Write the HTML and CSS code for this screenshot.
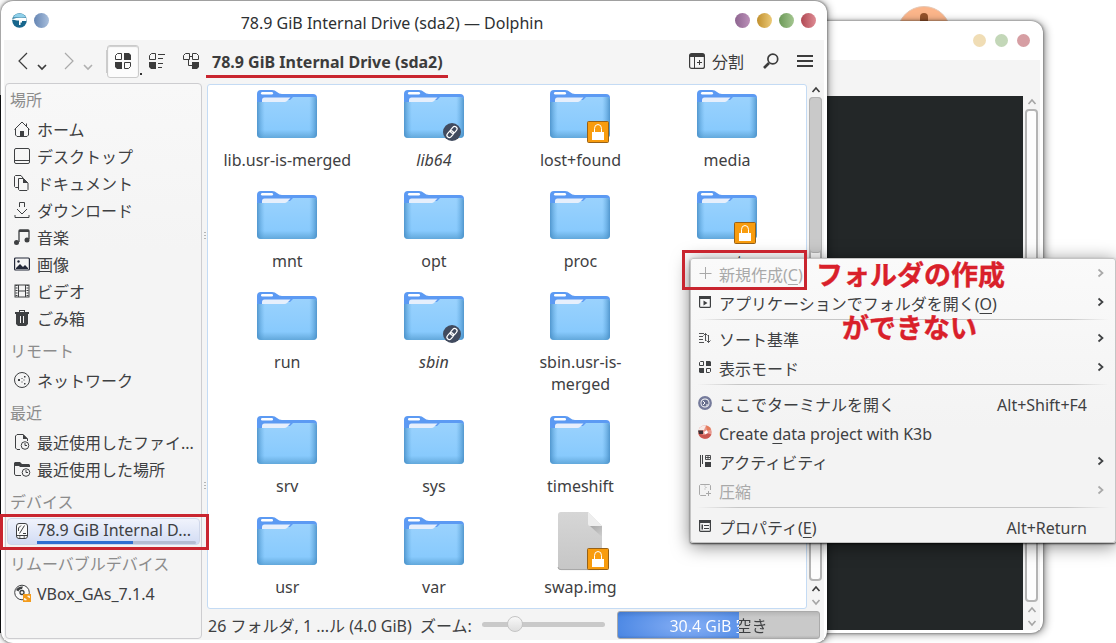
FILE: index.html
```
<!DOCTYPE html>
<html lang="ja">
<head>
    <meta charset="UTF-8">
    <title>78.9 GiB Internal Drive (sda2) — Dolphin</title>
    <link rel="stylesheet" href="styles.css">
</head>
<body>

    <!-- アイコン定義 -->
    <svg class="defs" width="0" height="0">
        <defs>
            <linearGradient id="gFront" x1="0" y1="0" x2="0" y2="1">
                <stop offset="0" stop-color="#9ad2fd"/>
                <stop offset="0.8" stop-color="#88cafd"/>
                <stop offset="1" stop-color="#62a8db"/>
            </linearGradient>
            <linearGradient id="gSide" x1="0" y1="0" x2="1" y2="0">
                <stop offset="0" stop-color="#4289c2" stop-opacity="0.8"/>
                <stop offset="0.13" stop-color="#5ba6dd" stop-opacity="0"/>
                <stop offset="0.87" stop-color="#5ba6dd" stop-opacity="0"/>
                <stop offset="1" stop-color="#4289c2" stop-opacity="0.8"/>
            </linearGradient>
            <linearGradient id="gDoc" x1="0" y1="0" x2="0" y2="1">
                <stop offset="0" stop-color="#d6d6d6"/>
                <stop offset="1" stop-color="#c6c6c6"/>
            </linearGradient>
            <linearGradient id="gFold" x1="0" y1="0" x2="1" y2="1">
                <stop offset="0" stop-color="#a6a6a6"/>
                <stop offset="1" stop-color="#cfcfcf"/>
            </linearGradient>
        </defs>
        <symbol id="folder" viewBox="0 0 64 64">
            <path d="M2 20V9q0-4 4-4h11q3 0 5 2t5 2h31q4 0 4 4v10z" fill="#5c9af3"/>
            <rect x="6" y="7" width="12" height="2.4" rx="1.2" fill="#fff"/>
            <path d="M2 17h5l1-2h27l3-3h20q4 0 4 3v34q0 4-4 4H6q-4 0-4-4z" fill="url(#gFront)"/>
            <path d="M2 17h5l1-2h27l3-3h20q4 0 4 3v34q0 4-4 4H6q-4 0-4-4z" fill="url(#gSide)"/>
            <path d="M7 17v-2q0-2.500 2.500-2.500h26L32.500 15.500q-1.500 1.500-3 1.500z" fill="#e6effc"/>
        </symbol>
        <symbol id="file" viewBox="0 0 64 64">
            <path d="M10 3q0-3 3-3h27l14 14v41q0 3-3 3H13q-3 0-3-3z" fill="url(#gDoc)"/>
            <path d="M10 55q0 2.600 3 2.600h38q3 0 3-2.600" fill="none" stroke="#a5a5a5"/>
            <path d="M42 14h12v11z" fill="url(#gFold)"/>
            <path d="M40 0l14 14H42q-2 0-2-2z" fill="#eee"/>
        </symbol>
        <symbol id="lock" viewBox="0 0 22 22">
            <rect x="0.500" y="0.500" width="21" height="21" rx="1" fill="#f89c0e" stroke="#976117"/>
            <path d="M7.500 11V7.500a3.500 4 0 0 1 7 0V11" fill="none" stroke="#fff" stroke-width="1"/>
            <rect x="5" y="11" width="12" height="8" fill="#fff"/>
        </symbol>
        <symbol id="link" viewBox="0 0 18 18">
            <circle cx="9" cy="9" r="9" fill="#414b5f"/>
            <g fill="none" stroke="#fff" stroke-width="1.200" transform="rotate(-50 9 9)">
                <rect x="2.500" y="6.600" width="7.500" height="4.800" rx="2.400"/>
                <rect x="8" y="6.600" width="7.500" height="4.800" rx="2.400"/>
            </g>
        </symbol>
        <symbol id="arrow" viewBox="0 0 8 10">
            <path d="M1.500 1.500L5.500 5 1.500 8.500" fill="none" stroke="currentColor" stroke-width="1.700"/>
        </symbol>
        <symbol id="up" viewBox="0 0 10 8">
            <path d="M1.500 6L5 2l3.500 4" fill="none" stroke="currentColor" stroke-width="1.600"/>
        </symbol>
        <symbol id="down" viewBox="0 0 10 8">
            <path d="M1.500 2L5 6l3.500-4" fill="none" stroke="currentColor" stroke-width="1.600"/>
        </symbol>
    </svg>

    <div class="dock-icon"><i></i></div>
    <div class="edge"></div>

    <!-- 後ろのターミナル -->
    <div class="terminal">
        <div class="terminal-title"><i class="y"></i><i class="g"></i><i class="r"></i></div>
        <div class="terminal-body">
            <div class="screen"></div>
            <div class="scroll dim">
                <svg width="10" height="8"><use href="#up"/></svg>
                <div class="trough"></div>
                <svg width="10" height="8"><use href="#up"/></svg>
                <svg width="10" height="8"><use href="#down"/></svg>
            </div>
        </div>
    </div>

    <!-- Dolphin -->
    <div class="window">
        <div class="titlebar">
            <svg width="15" height="15" viewBox="0 0 15 15"><circle cx="7.500" cy="7.500" r="7.300" fill="#17668c"/><path d="M1 4.500a7.300 7.300 0 0 1 13 0z" fill="#8fd0ea"/><path d="M0 6q6-2 14.500-1v3H10v1.500H8.500V12H7V7.500H5L0 6.500z" fill="#fff"/></svg>
            <i class="blue"></i>
            <span class="title">78.9 GiB Internal Drive (sda2) — Dolphin</span>
            <i class="purple"></i><i class="yellow"></i><i class="green"></i><i class="red"></i>
        </div>

        <div class="toolbar">
            <svg class="nav" width="90" height="24" viewBox="0 0 90 24" fill="none" stroke="#3c3c3c">
                <path d="M13 4L5 12l8 8" stroke-width="1.200"/>
                <path d="M24 16l4 4 4-4" stroke-width="1.700"/>
                <path d="M51 4l8 8-8 8" stroke="#aaa" stroke-width="1.200"/>
                <path d="M70 16l4 4 4-4" stroke="#b0b0b0" stroke-width="1.600"/>
            </svg>
            <div class="view-active"><svg width="16" height="16" viewBox="0 0 16 16"><path d="M2.500.5h4v6h-6v-4zM9.500 9.500h6v4l-2 2h-4z" fill="none" stroke="currentColor"/><path d="M9 0h5l2 2v5H9zM0 9h7v7H2l-2-2z" fill="currentColor"/></svg></div>
            <i class="dot"></i>
            <svg class="view" width="16" height="16" viewBox="0 0 16 16"><path d="M2.500.5h4v6h-6v-4z" fill="none" stroke="#3c3c3c"/><path d="M0 9h7v7H2l-2-2zM9 1h7v1H9zM9 5h5v1H9zM9 10h5v1H9zM9 14h4v1H9z" fill="#3c3c3c"/></svg>
            <svg class="view" width="16" height="16" viewBox="0 0 16 16"><path d="M2.500.5h4v6h-6v-4zM9.500.5h4l2 2v4h-6zM6.500 3.500h3M5.500 6.500v6H9" fill="none" stroke="#3c3c3c"/><path d="M9 9h7v5l-2 2H9z" fill="#3c3c3c"/></svg>
            <b class="path">78.9 GiB Internal Drive (sda2)</b>
            <svg width="16" height="16" viewBox="0 0 16 16"><rect x=".6" y=".6" width="14.800" height="14.800" rx="2" fill="none" stroke="#3c3c3c" stroke-width="1.200"/><path d="M1 1h14v3H1z" fill="#3c3c3c"/><path d="M5.500 3v12M8 9.500h5M10.500 7v5" stroke="#3c3c3c" fill="none"/></svg>
            <span class="split">分割</span>
            <svg class="search" width="16" height="16" viewBox="0 0 16 16" fill="none" stroke="#3c3c3c"><circle cx="9.800" cy="6" r="4.900" stroke-width="1.700"/><path d="M6 10L1 15" stroke-width="2.700"/></svg>
            <svg width="16" height="16" viewBox="0 0 16 16"><path d="M0 2h16v2H0zM0 7h16v2H0zM0 12h16v2H0z" fill="#3c3c3c"/></svg>
        </div>

        <div class="content">
            <div class="places">
                <h2>場所</h2>
                <div class="place"><svg viewBox="0 0 16 16"><path d="M.5 8.500L8 1l7.500 7.500M1.500 8v6l1.500 1.500h10l1.500-1.500V8M12.500 5V2.500" fill="none" stroke="currentColor"/><path d="M6 10h4v6H6z" fill="currentColor"/></svg>ホーム</div>
                <div class="place"><svg viewBox="0 0 16 16"><rect x=".5" y=".5" width="15" height="15" rx="1.500" fill="none" stroke="currentColor"/><path d="M1 12.500h14" stroke="currentColor"/></svg>デスクトップ</div>
                <div class="place"><svg viewBox="0 0 16 16"><path d="M4 12.500H1.500l-1-1v-10l1-1H7L9 3M4.500 3.500h5l4.500 4.500v6.500l-1 1H5.500l-1-1z" fill="none" stroke="currentColor"/><path d="M9 3l5 5H9z" fill="currentColor"/></svg>ドキュメント</div>
                <div class="place"><svg viewBox="0 0 16 16"><path d="M5.500 5V.5h5V5M3 7l5 5 5-5M1 13v2.500h14V13" fill="none" stroke="currentColor"/></svg>ダウンロード</div>
                <div class="place"><svg viewBox="0 0 16 16"><path d="M5 13V2q0-1 1-1h8q1 0 1 1v8" fill="none" stroke="currentColor" stroke-width="1.300"/><path d="M5 1h10v2H5z" fill="currentColor"/><circle cx="2.500" cy="13.500" r="2.500" fill="currentColor"/><circle cx="13" cy="11" r="2.500" fill="currentColor"/></svg>音楽</div>
                <div class="place"><svg viewBox="0 0 16 16"><rect x=".6" y="2" width="14.800" height="12" rx="1" fill="none" stroke="#232838" stroke-width="1.200"/><path d="M2 13v-1l4-4 3 3 2-2 3 3v1z" fill="#232838"/><circle cx="4.500" cy="5.500" r="1.200" fill="#232838"/></svg>画像</div>
                <div class="place"><svg viewBox="0 0 16 16"><rect x="1" y="2" width="14" height="12" fill="none" stroke="currentColor"/><path d="M4.500 2v12M11.500 2v12M4 8h8" stroke="currentColor"/><path d="M2.500 2v12M13.500 2v12" stroke="currentColor" stroke-width="2" stroke-dasharray="1 1.500"/></svg>ビデオ</div>
                <div class="place"><svg viewBox="0 0 16 16"><path d="M1 2h4V0h6v2h4v2h-1v10l-2 2H4l-2-2V4H1zM6 2h4V1H6z" fill="currentColor" fill-rule="evenodd"/><path d="M6.500 6v7M9.500 6v7" stroke="#f4f4f4"/></svg>ごみ箱</div>
                <h2>リモート</h2>
                <div class="place"><svg viewBox="0 0 16 16"><circle cx="8" cy="8" r="7.500" fill="none" stroke="currentColor"/><path d="M4 7h2v2H4zM10 4h1.500v1.500H10zM10 11h1.500v1.500H10zM7.500 6h1v1h-1zM7.500 9.500h1v1h-1zM9.500 7.500h1v1h-1z" fill="currentColor"/></svg>ネットワーク</div>
                <h2>最近</h2>
                <div class="place"><svg viewBox="0 0 16 16"><path d="M6 15.500H3L1.500 14V2L3 .5h6l4.500 4.500v2" fill="none" stroke="currentColor"/><path d="M9 0l5 5H9z" fill="currentColor"/><circle cx="11" cy="11.500" r="3.800" fill="none" stroke="currentColor"/><path d="M11 9v2.500h2" fill="none" stroke="currentColor"/></svg>最近使用したファイ...</div>
                <div class="place"><svg viewBox="0 0 16 16"><path d="M0 2l1-1h5l2 2h7l1 1v2H6L5 5H0z" fill="currentColor"/><path d="M.5 4v9l1 1.500H7" fill="none" stroke="currentColor"/><circle cx="12" cy="11.500" r="3.800" fill="none" stroke="currentColor"/><path d="M12 9v2.500h2" fill="none" stroke="currentColor"/></svg>最近使用した場所</div>
                <h2>デバイス</h2>
                <div class="place selected"><svg viewBox="0 0 16 16"><rect x="2.500" y=".5" width="11" height="15" rx="2.500" fill="#fafafa" stroke="currentColor"/><path d="M3 12.500h10M5 14h1.500M9.500 14H11M5.500 10.500l5-8M4.500 8V5l2.500-2.500M9 10.500h3" fill="none" stroke="currentColor"/></svg><div class="device">78.9 GiB Internal D...<div class="usage"><div style="width: 60.500%"></div></div></div></div>
                <h2>リムーバブルデバイス</h2>
                <div class="place"><svg viewBox="0 0 16 16"><circle cx="8" cy="7.500" r="7.300" fill="#fafafa" stroke="currentColor"/><path d="M7 8L2 5Q4 1 9 1.500L8 4Q5 4 4.500 6.500z" fill="currentColor"/><circle cx="8" cy="7.500" r="2" fill="#fafafa" stroke="currentColor" stroke-width="1.300"/><rect x="9" y="9" width="8" height="8" fill="#f39b1c"/><path d="M10.500 15v-2l2 2zM15.500 11v2l-2-2z" fill="#fff" stroke="#fff" stroke-width=".6"/></svg>VBox_GAs_7.1.4</div>
            </div>

            <div class="splitter"><i></i><i></i></div>

            <div class="main">
                <div class="view-row">
                    <div class="files">
                        <div class="file"><svg class="icon"><use href="#folder"/></svg>lib.usr-is-merged</div>
                        <div class="file linked"><svg class="icon"><use href="#folder"/></svg><svg class="badge-link"><use href="#link"/></svg>lib64</div>
                        <div class="file"><svg class="icon"><use href="#folder"/></svg><svg class="badge-lock"><use href="#lock"/></svg>lost+found</div>
                        <div class="file"><svg class="icon"><use href="#folder"/></svg>media</div>
                        <div class="file"><svg class="icon"><use href="#folder"/></svg>mnt</div>
                        <div class="file"><svg class="icon"><use href="#folder"/></svg>opt</div>
                        <div class="file"><svg class="icon"><use href="#folder"/></svg>proc</div>
                        <div class="file"><svg class="icon"><use href="#folder"/></svg><svg class="badge-lock"><use href="#lock"/></svg>root</div>
                        <div class="file"><svg class="icon"><use href="#folder"/></svg>run</div>
                        <div class="file linked"><svg class="icon"><use href="#folder"/></svg><svg class="badge-link"><use href="#link"/></svg>sbin</div>
                        <div class="file"><svg class="icon"><use href="#folder"/></svg>sbin.usr-is-<br>merged</div>
                        <div class="file"></div>
                        <div class="file"><svg class="icon"><use href="#folder"/></svg>srv</div>
                        <div class="file"><svg class="icon"><use href="#folder"/></svg>sys</div>
                        <div class="file"><svg class="icon"><use href="#folder"/></svg>timeshift</div>
                        <div class="file"></div>
                        <div class="file"><svg class="icon"><use href="#folder"/></svg>usr</div>
                        <div class="file"><svg class="icon"><use href="#folder"/></svg>var</div>
                        <div class="file"><svg class="icon"><use href="#file"/></svg><svg class="badge-lock"><use href="#lock"/></svg>swap.img</div>
                    </div>
                    <div class="scroll">
                        <svg width="10" height="8"><use href="#up"/></svg>
                        <div class="trough"><div class="thumb"></div></div>
                        <svg width="10" height="8"><use href="#up"/></svg>
                        <svg class="off" width="10" height="8"><use href="#down"/></svg>
                    </div>
                </div>
                <div class="status">
                    <span class="count">26 フォルダ, 1 ...ル (4.0 GiB)</span>
                    <span class="zoom-label">ズーム:</span>
                    <div class="slider"><i></i></div>
                    <div class="space"><span>30.4 GiB 空き</span></div>
                </div>
            </div>
        </div>
    </div>

    <!-- 右クリックメニュー -->
    <div class="menu">
        <div class="item off"><svg viewBox="0 0 12 12"><path d="M6.500 0v12M.5 6.500h12" stroke="currentColor"/></svg><span>新規作成(<u>C</u>)</span><svg class="arrow"><use href="#arrow"/></svg></div>
        <div class="item"><svg viewBox="0 0 12 12"><rect x=".6" y=".6" width="10.800" height="10.800" rx="1" fill="none" stroke="currentColor" stroke-width="1.200"/><path d="M0 0h12v3H0zM4.500 4.500l4 2.500-4 2.500z" fill="currentColor"/></svg><span>アプリケーションでフォルダを開く(<u>O</u>)</span><svg class="arrow"><use href="#arrow"/></svg></div>
        <hr>
        <div class="item"><svg viewBox="0 0 12 12"><path d="M0 1.500h5M0 4.500h4M0 7.500h4M0 10.500h5M6.500 9V1.500M4.500 3.500l2-2 2 2M9.500 3v7.500M7.500 8.500l2 2 2-2" fill="none" stroke="currentColor" stroke-width=".9"/></svg><span>ソート基準</span><svg class="arrow"><use href="#arrow"/></svg></div>
        <div class="item"><svg viewBox="0 0 12 12"><path d="M1.500.5h3v4h-4v-3zM7.500 7.500h4v3l-1 1h-3z" fill="none" stroke="currentColor"/><path d="M7 0h4l1 1v4H7zM0 7h5v5H1l-1-1z" fill="currentColor"/></svg><span>表示モード</span><svg class="arrow"><use href="#arrow"/></svg></div>
        <hr>
        <div class="item"><svg class="round" viewBox="0 0 14 14"><circle cx="7" cy="7" r="5.700" fill="#fff" stroke="#757b9b" stroke-width="2.400"/><circle cx="7" cy="7" r="3.600" fill="#69708f"/><path d="M5 5l2 2-2 2M8 9h2" stroke="#fff" fill="none"/></svg><span>ここでターミナルを開く</span><kbd>Alt+Shift+F4</kbd></div>
        <div class="item"><svg class="round" viewBox="0 0 14 14"><circle cx="7" cy="7" r="6.800" fill="#e8998f"/><path d="M.3 8a6.800 6.800 0 0 0 13 1.500L9 8l-3 2z" fill="#cb5750"/><path d="M1 4Q3 0 8 .5L6 5H1z" fill="#f8ece9"/><path d="M0 5.500h5V9H1z" fill="#3f3136"/><path d="M8 .5q4 1 5 4L9 6z" fill="#e57a58"/><path d="M6 7l3-2 1 3-3 1.500z" fill="#fff"/></svg><span>Create <u>d</u>ata project with K3b</span></div>
        <div class="item"><svg viewBox="0 0 12 12"><path d="M1.500 0v12M3.500 0v9" stroke="currentColor"/><path d="M6.500.5h5v4h-5zM9 1v3M6.500 2.500h5" fill="none" stroke="currentColor" stroke-width=".9"/><path d="M6 7h6v5H6z" fill="currentColor"/></svg><span>アクティビティ</span><svg class="arrow"><use href="#arrow"/></svg></div>
        <div class="item off"><svg viewBox="0 0 12 12"><path d="M7 11.500H1.500l-1-1v-9l1-1h9l1 1V6M9.500 7v5M7 9.500h5M5.500 2h1M6.500 3.500h1M5.500 5h1" fill="none" stroke="currentColor"/></svg><span>圧縮</span><svg class="arrow"><use href="#arrow"/></svg></div>
        <hr>
        <div class="item"><svg viewBox="0 0 12 12"><rect x=".6" y=".6" width="10.800" height="10.800" rx="1" fill="none" stroke="currentColor" stroke-width="1.200"/><path d="M0 0h12v3H0zM2.500 4.500H4v5H2.500z" fill="currentColor"/><path d="M5 5.500h5M5 8.500h5" stroke="currentColor"/></svg><span>プロパティ(<u>E</u>)</span><kbd>Alt+Return</kbd></div>
    </div>

    <!-- 注釈 -->
    <div class="mark mark-line"></div>
    <div class="mark mark-device"></div>
    <div class="mark mark-create"></div>
    <div class="note note-1">フォルダの作成</div>
    <div class="note note-2">ができない</div>

</body>
</html>
```
FILE: styles.css
```
* {
    box-sizing: border-box;
}
body {
    margin: 0;
    width: 1116px;
    height: 643px;
    overflow: hidden;
    position: relative;
    background-color: #fff;
    color: #3e4042;
    font-family: "Noto Sans", "Noto Sans CJK JP", sans-serif;
    font-size: 16px;
    line-height: 22px;
    white-space: nowrap;
}
svg {
    display: block;
    flex-shrink: 0;
}
.defs {
    position: absolute;
}
.dock-icon {
    position: absolute;
    left: 897px;
    top: 6px;
    width: 54px;
    height: 54px;
    border-radius: 50%;
    background-color: #fbb58a;
    border: 1px solid #e6c9b6;
    display: flex;
    justify-content: center;
    padding-top: 6px;
}
.dock-icon i {
    width: 8px;
    height: 20px;
    border-radius: 4px;
    background-color: #94522a;
}
.edge {
    position: absolute;
    left: 0;
    top: 95px;
    width: 2px;
    height: 538px;
    background-color: #17191a;
}

/* terminal window */
.terminal {
    position: absolute;
    left: 500px;
    top: 21px;
    width: 543px;
    height: 612px;
    border-radius: 12px;
    background-color: #fff;
    box-shadow: 0 0 3px rgba(0, 0, 0, 0.55), 2px 1px 8px rgba(0, 0, 0, 0.45);
    padding: 0 3px 3px;
    display: flex;
    flex-direction: column;
}
.terminal-title {
    height: 39px;
    display: flex;
    justify-content: flex-end;
    align-items: center;
    gap: 9px;
    padding-right: 10px;
}
.terminal-title i {
    width: 13px;
    height: 13px;
    border-radius: 50%;
}
.terminal-title .y { background: #f0ddb5; }
.terminal-title .g { background: #c3d7b8; }
.terminal-title .r { background: #d69ea3; }
.terminal-body {
    flex: 1;
    display: flex;
    padding-top: 36px;
    background-color: #f4f4f4;
}
.screen {
    flex: 1;
    background-color: #232728;
}

.scroll {
    width: 17px;
    display: flex;
    flex-direction: column;
    align-items: center;
    color: #3c3c3c;
}
.scroll svg {
    margin: 2px 0 3px;
}
.scroll .off,
.dim svg {
    color: #a5a5a5;
}
.trough {
    flex: 1;
    width: 13px;
    margin-bottom: 2px;
    border: 2px solid #b4b4b4;
    border-radius: 4px;
    background-color: #fdfdfd;
}
.thumb {
    width: 13px;
    height: 156px;
    margin: -2px;
    border: 1px solid #b2b2b2;
    border-radius: 4px;
    background-color: #c9c9c9;
}

/* file manager window */
.window {
    position: absolute;
    left: 1px;
    top: 1px;
    width: 826px;
    height: 642px;
    border-radius: 12px;
    background-color: #fff;
    box-shadow: 0 0 3px rgba(0, 0, 0, 0.6), 1px 0 9px rgba(0, 0, 0, 0.45);
    padding: 0 3px 3px;
    display: flex;
    flex-direction: column;
}
.titlebar {
    height: 39px;
    display: flex;
    align-items: center;
    padding: 0 8px;
    gap: 7px;
    color: #2d3032;
}
.titlebar i {
    width: 15px;
    height: 15px;
    border-radius: 50%;
}
.blue { background: linear-gradient(to right, #6585b3, #a9bfdc); }
.purple { background: linear-gradient(to right, #8e6590, #bb90b8); }
.yellow { background: linear-gradient(to right, #c1902e, #ecca78); }
.green { background: linear-gradient(to right, #6c9958, #a4c690); }
.red { background: linear-gradient(to right, #b04853, #de8c94); }
.title {
    flex: 1;
    text-align: center;
    padding-top: 5px;
}
.toolbar {
    height: 43px;
    background-color: #f5f5f5;
    display: flex;
    align-items: center;
    padding: 0 11px 1px 10px;
    color: #3c3c3c;
}
.nav {
    margin-right: -1px;
}
.view-active {
    width: 32px;
    height: 33px;
    margin-left: 4px;
    background-color: #fcfcfc;
    border: 1px solid #cbcbcb;
    border-radius: 3px;
    box-shadow: inset 0 1px 1px #ccc, -6px 0 0 -5px #ccc;
    display: flex;
    align-items: center;
    justify-content: center;
}
.dot {
    width: 2px;
    height: 2px;
    margin: 25px 7px 0 1px;
    background-color: #333;
}
.view {
    margin-right: 18px;
}
.path {
    flex: 1;
    margin-left: -5px;
    padding-top: 2px;
}
.split {
    margin: 0 19px 0 7px;
    padding-top: 2px;
}
.search {
    margin-right: 18px;
}
.content {
    flex: 1;
    display: flex;
    background-color: #f4f4f4;
}
.places {
    width: 197px;
    height: 556px;
    margin-left: 1px;
    border: 1px solid #cdcdd0;
    border-radius: 4px;
    background: linear-gradient(#f8f8f8, #f4f4f4 30%);
}
.places h2 {
    margin: 0;
    padding: 8px 0 5px 4px;
    height: 35px;
    font-size: 16px;
    font-weight: normal;
    color: #8c8c8c;
}
.places h2:first-child {
    padding-top: 5px;
    height: 32px;
}
.place {
    height: 27px;
    padding-left: 8px;
    display: flex;
    align-items: center;
    gap: 7px;
}
.place svg {
    width: 16px;
    height: 16px;
    overflow: visible;
    margin-top: -1px;
}
.selected {
    margin: 0 1px;
    padding-left: 6px;
    border-radius: 4px;
    background: linear-gradient(#f0f3fc, #d2dcf4);
    border: 1px solid #cfd7ea;
}
.device {
    width: 159px;
    line-height: 21px;
}
.usage {
    height: 3px;
    border-radius: 2px;
    background-color: #b4bdd2;
}
.usage div {
    height: 3px;
    background-color: #2f6fd0;
}
.splitter {
    width: 5px;
    display: flex;
    flex-direction: column;
    align-items: center;
    padding-top: 149px;
    gap: 241px;
}
.splitter i {
    width: 2px;
    height: 9px;
    background: repeating-linear-gradient(#b5b5b5 0 1px, transparent 1px 3px);
}
.main {
    flex: 1;
    display: flex;
    flex-direction: column;
    padding-top: 1px;
}
.view-row {
    height: 525px;
    display: flex;
}
.files {
    width: 600px;
    border: 1px solid #c4dbf4;
    border-radius: 3px;
    background-color: #fff;
    display: grid;
    grid-template-columns: repeat(4, 146.600px);
    grid-template-rows: 101px 101px 124px 101px 96px;
    padding-left: 6px;
    overflow: hidden;
}
.file {
    position: relative;
    text-align: center;
}
.linked {
    font-style: italic;
}
.icon {
    width: 64px;
    height: 64px;
    margin: 0 auto;
}
.badge-link,
.badge-lock {
    position: absolute;
    left: 80px;
    top: 36px;
    width: 22px;
    height: 22px;
}
.badge-link {
    left: 82px;
    top: 38px;
    width: 18px;
    height: 18px;
}
.status {
    flex: 1;
    display: flex;
    align-items: center;
    padding-left: 1px;
}
.count {
    width: 212px;
    padding-top: 2px;
}
.zoom-label {
    width: 62px;
    padding-top: 2px;
}
.slider {
    width: 123px;
    height: 5px;
    border-radius: 3px;
    background-color: #c9c9c9;
}
.slider i {
    display: block;
    width: 16px;
    height: 16px;
    margin: -6px 0 0 25px;
    border-radius: 50%;
    background: linear-gradient(#f8f8f8, #dedede);
    border: 1px solid #c4c4c4;
}
.space {
    width: 203px;
    height: 28px;
    margin-left: 12px;
    border-radius: 3px;
    border: 1px solid #aaa;
    background: linear-gradient(#00000018, transparent 20% 90%, #0000001a), radial-gradient(ellipse 90px 30px at 70px 14px, #86aff5, #3f7fe0) 0 0 / 121px 100% no-repeat, #c9c9c9;
    display: flex;
    justify-content: center;
    align-items: center;
}
.space span {
    padding-top: 2px;
    background: linear-gradient(to right, #fff 70px, #3e4042 70px);
    background-clip: text;
    -webkit-background-clip: text;
    color: transparent;
}

/* context menu */
.menu {
    position: absolute;
    left: 690px;
    top: 258px;
    width: 426px;
    height: 285px;
    border: 1px solid #c4c4c4;
    border-radius: 3px;
    background: linear-gradient(#fafafa, #f3f3f3 60%);
    box-shadow: 0 1px 2px rgba(0, 0, 0, 0.7), 0 3px 18px rgba(0, 0, 0, 0.5);
}
.menu hr {
    height: 1px;
    margin: 2px 6px 4px;
    border: none;
    background: linear-gradient(to right, transparent, #c6c6c6 10% 90%, transparent);
}
.item {
    height: 29px;
    display: flex;
    align-items: center;
    padding: 2px 10px 0 8px;
}
.item svg {
    width: 12px;
    height: 12px;
    margin-top: -3px;
    overflow: visible;
}
.item svg.round {
    width: 14px;
    height: 14px;
    margin: -3px -1px 0;
}
.item span {
    flex: 1;
    margin-left: 8px;
}
.item .arrow {
    width: 8px;
    height: 10px;
}
.item kbd {
    font-family: inherit;
    margin-right: 18px;
}
.item.off {
    color: #a9a9a9;
}
.item u {
    text-underline-offset: 3px;
}

/* red marks */
.mark {
    position: absolute;
    border: 3px solid #c9252f;
}
.mark-line {
    left: 206px;
    top: 75px;
    width: 242px;
    border-width: 3px 0 0;
}
.mark-device {
    left: 0;
    top: 514px;
    width: 209px;
    height: 36px;
}
.mark-create {
    left: 682px;
    top: 250px;
    width: 125px;
    height: 40px;
}
.note {
    position: absolute;
    color: #d9202a;
    font-size: 27px;
    line-height: 36px;
    font-weight: bold;
    font-family: "Noto Sans CJK JP", sans-serif;
    -webkit-text-stroke: 0.4px #d9202a;
}
.note-1 {
    left: 816px;
    top: 256px;
}
.note-2 {
    left: 842px;
    top: 309px;
}
```
